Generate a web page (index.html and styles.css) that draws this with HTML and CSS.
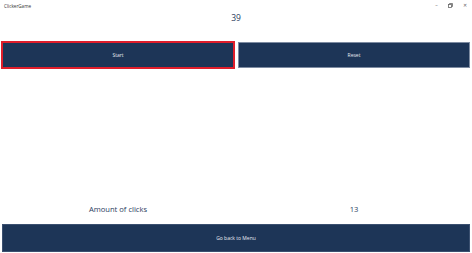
FILE: index.html
```html
<!DOCTYPE html>
<html lang="en">
<head>
    <meta charset="UTF-8">
    <title>ClickerGame</title>
    <link rel="stylesheet" href="styles.css">
</head>
<body>
    <div class="window">
        <div class="titlebar">
            <span class="app-title">ClickerGame</span>
            <div class="controls">
                <span class="ctl">&#8211;</span>
                <span class="ctl ctl-max">
                    <svg width="5" height="5" viewBox="0 0 5 5"><rect x="0.5" y="1.5" width="3" height="3" fill="none" stroke="#666" stroke-width="0.8"/><path d="M1.5 1.5V0.5H4.5V3.5H3.5" fill="none" stroke="#666" stroke-width="0.8"/></svg>
                </span>
                <span class="ctl">&#10005;</span>
            </div>
        </div>

        <div class="counter">39</div>

        <div class="actions">
            <button class="btn btn-focused">Start</button>
            <button class="btn">Reset</button>
        </div>

        <div class="spacer"></div>

        <div class="stats">
            <span>Amount of clicks</span>
            <span>13</span>
        </div>

        <button class="btn btn-back">Go back to Menu</button>
    </div>
</body>
</html>
```

FILE: styles.css
```css
body {
    margin: 0;
    background: #ffffff;
    font-family: 'Open Sans', 'Noto Sans', sans-serif;
}

.window {
    width: 472px;
    height: 253px;
    display: flex;
    flex-direction: column;
}

.titlebar {
    height: 11px;
    display: flex;
    align-items: center;
    justify-content: space-between;
    padding: 0 4px;
}

.app-title {
    font-size: 4.6px;
    color: #333;
}

.controls {
    display: flex;
    gap: 9px;
    align-items: center;
    padding-right: 1px;
}

.ctl {
    font-size: 5px;
    color: #666;
    width: 5px;
    text-align: center;
    line-height: 5px;
}

.ctl-max {
    display: flex;
}

.counter {
    height: 13px;
    text-align: center;
    font-size: 8.5px;
    color: #2a3d5e;
    line-height: 13px;
}

.actions {
    display: grid;
    grid-template-columns: 234px 232px;
    gap: 3px;
    margin: 17px 2px 0 1px;
    align-items: center;
}

.btn {
    background: #1d3557;
    color: #e8ecf2;
    border: 1px solid #7d8ba1;
    font-family: 'Open Sans', 'Noto Sans', sans-serif;
    font-size: 5px;
    padding: 0;
    height: 26px;
}

.btn-focused {
    border: 2px solid #e01e2b;
    height: 28px;
}

.spacer {
    flex: 1;
}

.stats {
    display: grid;
    grid-template-columns: 236px 236px;
    text-align: center;
    font-size: 7.6px;
    color: #2a3d5e;
    margin-bottom: 10px;
}

.btn-back {
    margin: 0 2px 1px 2px;
    height: 28px;
    border-color: #3b5070;
}
```
